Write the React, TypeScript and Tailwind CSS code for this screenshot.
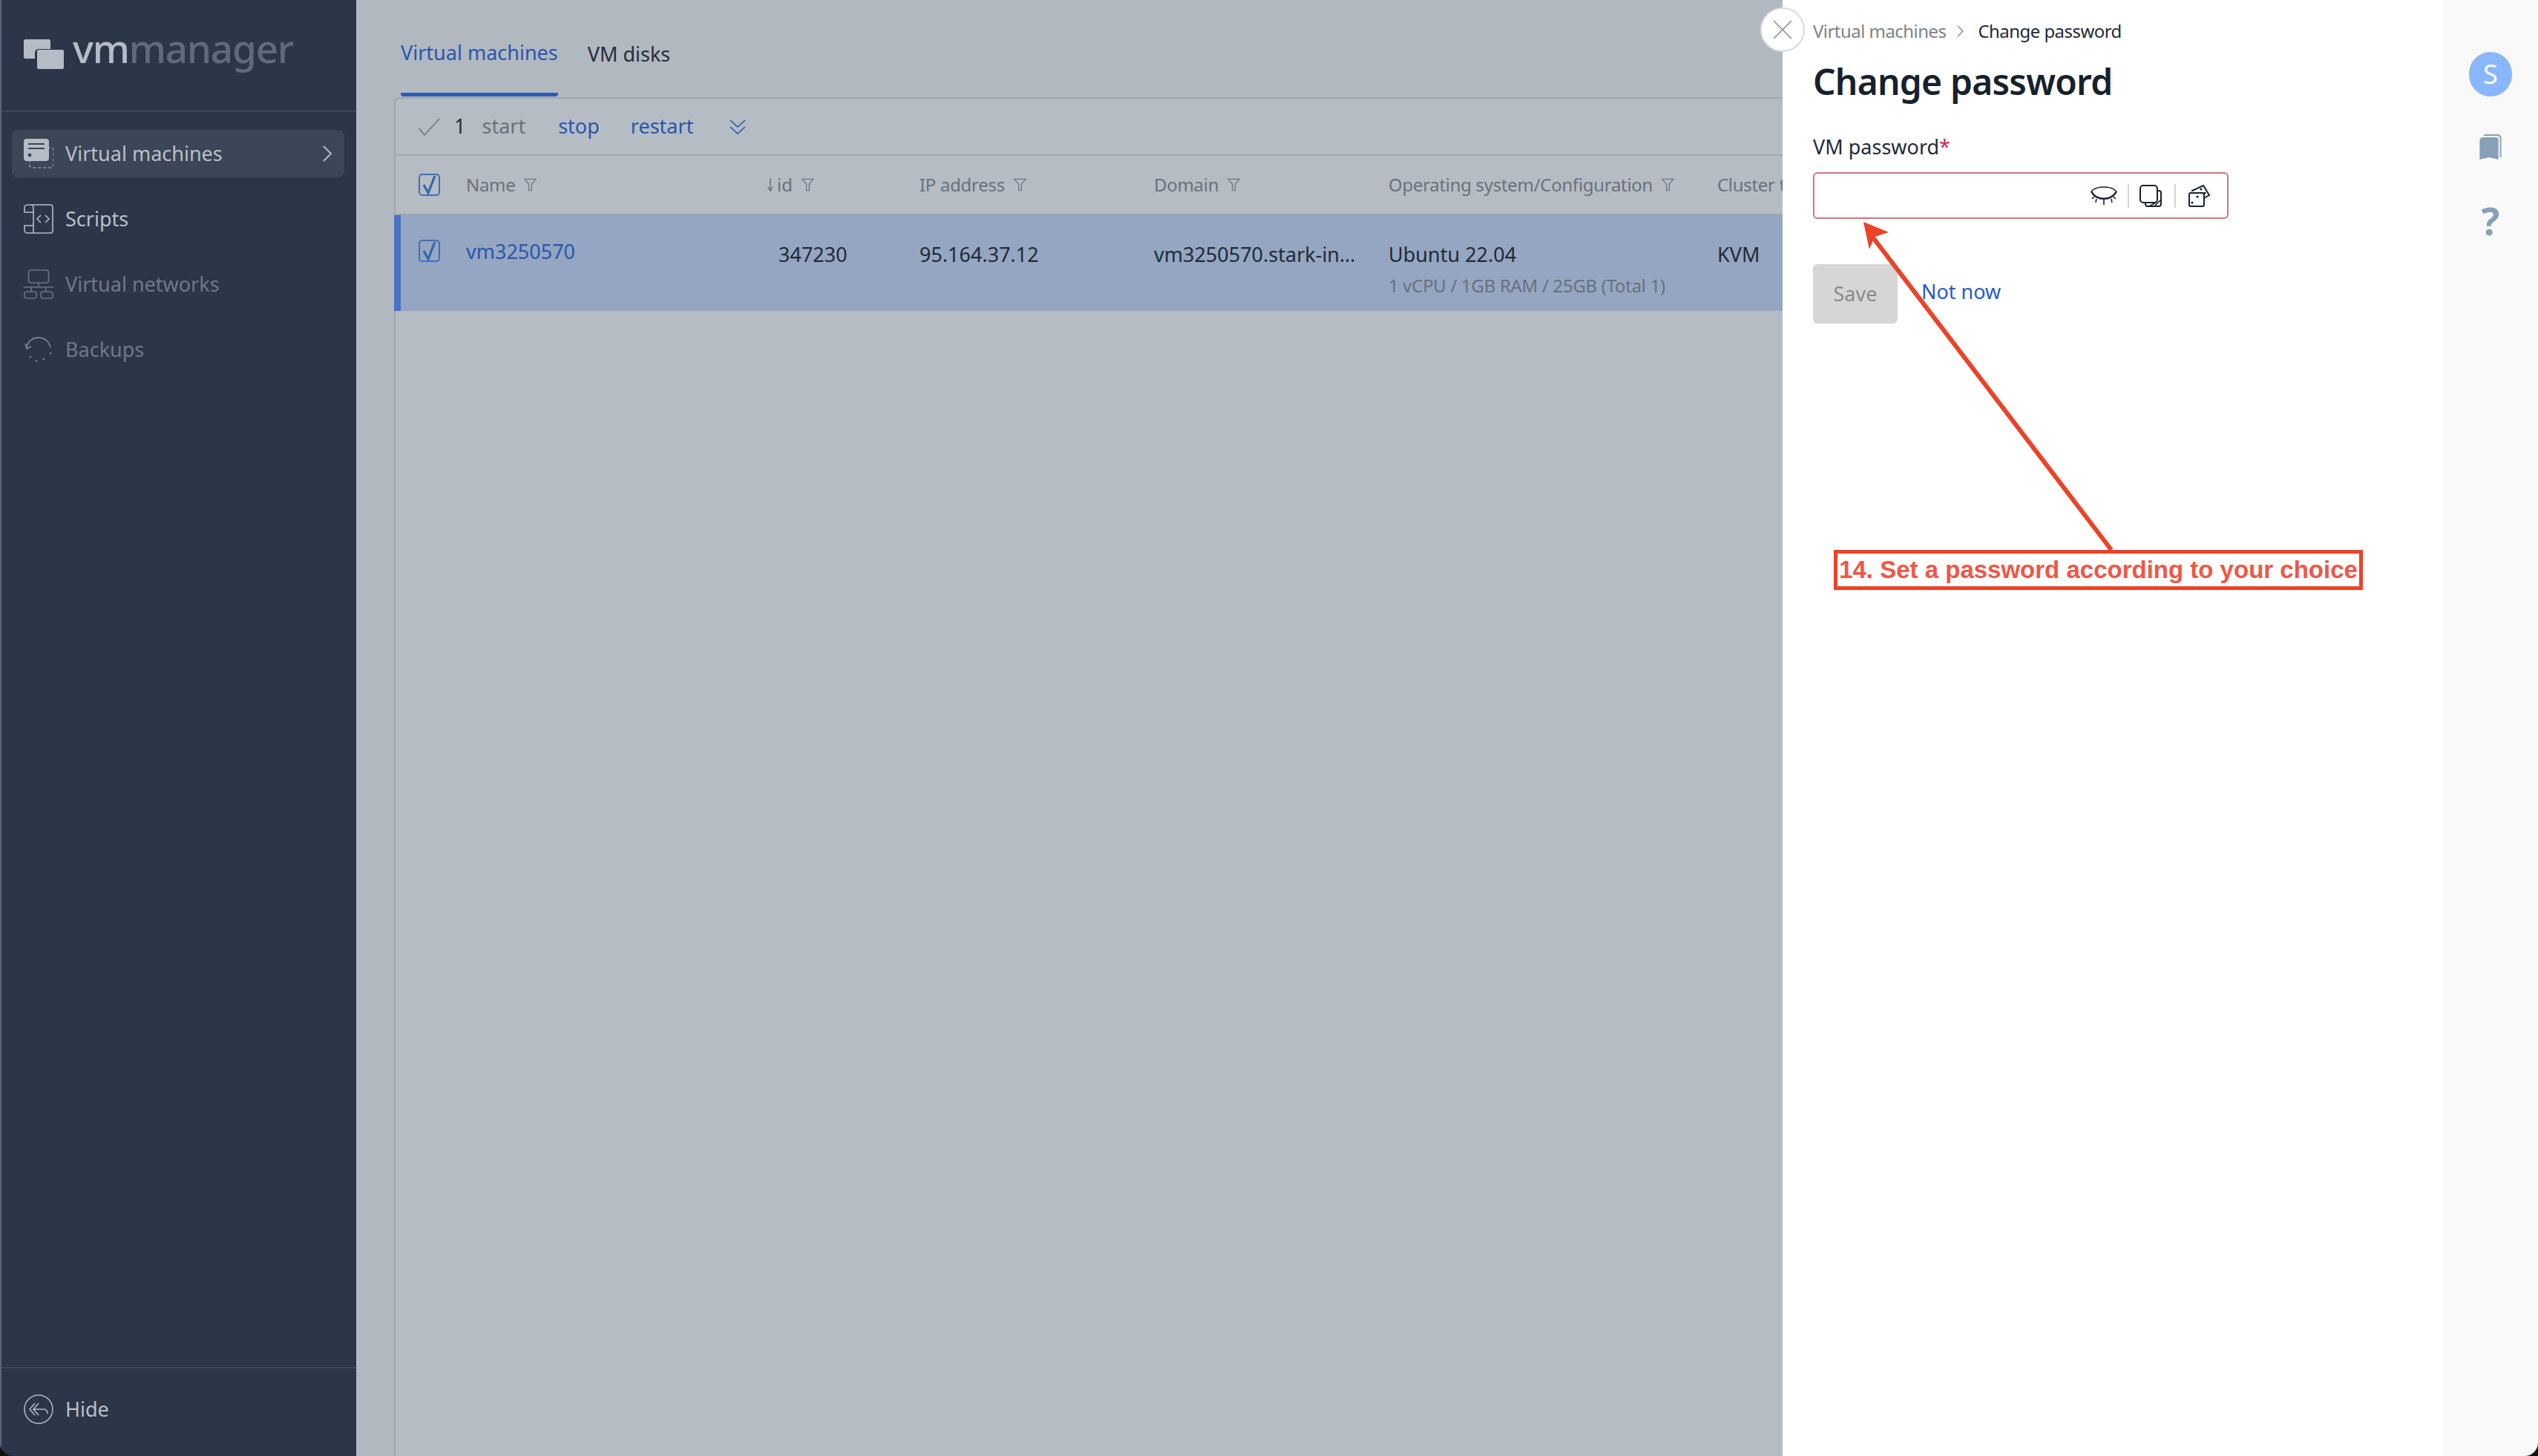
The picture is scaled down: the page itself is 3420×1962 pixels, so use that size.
import React from "react";

const Filter = ({ className = "" }: { className?: string }) => (
  <svg viewBox="0 0 18 18" className={`w-[17px] h-[18px] shrink-0 ${className}`} fill="none" stroke="#6f7883" strokeWidth="1.4">
    <path d="M1 1h16l-6 7v9H7V8z" />
  </svg>
);

const Check = () => (
  <svg viewBox="0 0 29 30" className="w-[29px] h-[30px] shrink-0" fill="none">
    <rect x="1" y="1" width="27" height="28" rx="4" stroke="#3f6ebd" strokeWidth="2" />
    <path d="M7 15l6 11L22 3" stroke="#2f66a8" strokeWidth="3" />
  </svg>
);

const VmIcon = () => (
  <svg viewBox="0 0 40 40" className="w-10 h-10 shrink-0" fill="none">
    <rect x="8" y="12" width="32" height="27" rx="3" stroke="#b4bcc6" strokeWidth="1.2" strokeDasharray="4 3" />
    <rect x="0" y="0" width="34" height="30" rx="4" fill="#b4bcc6" />
    <path d="M6 7h22M6 13h22" stroke="#3b4656" strokeWidth="2" />
    <circle cx="8" cy="22" r="2.4" fill="#3b4656" />
  </svg>
);

const ScriptIcon = () => (
  <svg viewBox="0 0 40 40" className="w-10 h-10 shrink-0" fill="none" stroke="#b4bcc6" strokeWidth="1.6">
    <path d="M5 1h31a3 3 0 0 1 3 3v32a3 3 0 0 1-3 3H5a4 4 0 0 1-4-4v-6h12M13 29v10M13 29V5a4 4 0 0 0-4-4H5a4 4 0 0 0-4 4v6h12" />
    <path d="M23 15l-5 5 5 5M29 15l5 5-5 5" strokeWidth="1.5" />
  </svg>
);

const NetIcon = () => (
  <svg viewBox="0 0 40 40" className="w-10 h-10 shrink-0" fill="none" stroke="#6a7480" strokeWidth="1.6">
    <rect x="6.5" y="1" width="27" height="17" rx="3" />
    <path d="M20 18v6M0 24h40M10 24v6M30 24v6" />
    <rect x="1" y="30" width="16" height="9" rx="3" />
    <rect x="23" y="30" width="16" height="9" rx="3" />
  </svg>
);

const BackupIcon = () => (
  <svg viewBox="0 0 40 40" className="w-10 h-10 shrink-0" fill="none" stroke="#8a929c" strokeWidth="1.4">
    <path d="M4 16C7 7 14 4 20 4c8 0 14 5 16 13" />
    <path d="M2 12l2 7 6-3" />
    <g fill="#8a929c" stroke="none">
      <circle cx="36" cy="25" r="1.2" />
      <circle cx="27" cy="33" r="1.2" />
      <circle cx="17" cy="35" r="1.2" />
      <circle cx="9" cy="30" r="1.2" />
    </g>
  </svg>
);

const HideIcon = () => (
  <svg viewBox="0 0 40 40" className="w-10 h-10 shrink-0" fill="none" stroke="#b4bcc6" strokeWidth="1.5">
    <circle cx="20" cy="20" r="19" />
    <path d="M15 12l-7 8 7 8M20 12l-7 8 7 8M14 20h13c3 0 5 2 5 6" />
  </svg>
);

const MenuItem = ({ icon, label, dim, active }: { icon: React.ReactNode; label: string; dim?: boolean; active?: boolean }) => (
  <div className={`ml-[14px] mr-4 h-16 rounded-lg flex items-center pl-4 pr-4 gap-4 ${active ? "bg-[#3b4656]" : ""}`}>
    {icon}
    <span className={`text-[27px] flex-1 ${dim ? "text-[#6f7985]" : "text-[#b8c0c9]"}`}>{label}</span>
    {active && (
      <svg viewBox="0 0 14 22" className="w-[14px] h-[22px]" fill="none" stroke="#b4bcc6" strokeWidth="2">
        <path d="M2 1l10 10L2 21" />
      </svg>
    )}
  </div>
);

const HeadCell = ({ label, className }: { label: string; className: string }) => (
  <div className={`flex items-center gap-3 shrink-0 text-[#69727d] text-[24px] tracking-[-0.3px] whitespace-nowrap ${className}`}>
    <span>{label}</span>
    <Filter />
  </div>
);

export default function App() {
  return (
    <div className="relative w-[3420px] h-[1962px] bg-[#0f1411] overflow-hidden font-['Noto_Sans',sans-serif]">
      <div className="flex w-full h-full rounded-b-[18px] overflow-hidden">
        {/* Sidebar */}
        <aside className="w-[480px] shrink-0 bg-[#2b3648] border-l-2 border-[#5d6573] flex flex-col">
          <div className="h-[151px] shrink-0 border-b-2 border-[#3c4858] flex items-center pl-[30px] gap-3 pb-1">
            <svg viewBox="0 0 54 40" className="w-[54px] h-10 shrink-0">
              <path d="M2 0h32a2 2 0 0 1 2 2v11H20a5 5 0 0 0-5 5v8H2a2 2 0 0 1-2-2V2a2 2 0 0 1 2-2z" fill="#b4bcc6" />
              <rect x="18" y="14" width="36" height="26" rx="2" fill="#b4bcc6" />
            </svg>
            <div className="text-[53px] leading-none tracking-[-1.2px] font-medium -mt-4">
              <span className="text-[#b4bcc6]">vm</span>
              <span className="text-[#5f6b79]">manager</span>
            </div>
          </div>
          <nav className="pt-6 flex flex-col gap-6 flex-1">
            <MenuItem icon={<VmIcon />} label="Virtual machines" active />
            <MenuItem icon={<ScriptIcon />} label="Scripts" />
            <MenuItem icon={<NetIcon />} label="Virtual networks" dim />
            <MenuItem icon={<BackupIcon />} label="Backups" dim />
          </nav>
          <div className="h-[120px] shrink-0 border-t-2 border-[#3c4858] flex items-center pl-[30px] gap-4 pb-2">
            <HideIcon />
            <span className="text-[27px] text-[#b8c0c9]">Hide</span>
          </div>
        </aside>

        {/* Main */}
        <main className="flex-1 min-w-0 bg-[#b1b8c0] pl-[51px] overflow-hidden flex flex-col">
          <div className="h-[131px] shrink-0 flex pl-[9px] gap-10">
            <div className="h-[130px] border-b-[5px] border-[#2e5bb0] rounded-b-sm flex items-center pt-[18px] text-[27px] text-[#2a56ad]">Virtual machines</div>
            <div className="h-[130px] flex items-center pt-4 text-[27px] text-[#252e39]">VM disks</div>
          </div>
          <section className="flex-1 w-[2000px] bg-[#b5bcc4] border-t-2 border-l-2 border-[#9fa6af] rounded-tl-lg">
            <div className="h-[77px] border-b-2 border-[#9fa6af] flex items-center pl-[31px] text-[27px]">
              <svg viewBox="0 0 29 24" className="w-[29px] h-6 shrink-0" fill="none" stroke="#6f7883" strokeWidth="1.5">
                <path d="M1 14l7 9L28 1" />
              </svg>
              <span className="ml-[19px] text-[#252e39]">1</span>
              <span className="ml-[22px] text-[#69727d]">start</span>
              <span className="ml-[44px] text-[#2a56ad]">stop</span>
              <span className="ml-[42px] text-[#2a56ad]">restart</span>
              <svg viewBox="0 0 22 20" className="ml-[49px] w-[22px] h-5 shrink-0" fill="none" stroke="#2a56ad" strokeWidth="1.6">
                <path d="M1 1l10 9 10-9M1 10l10 9 10-9" />
              </svg>
            </div>
            <div className="h-[80px] border-b-2 border-[#9fa6af] flex items-center pl-[31px]">
              <Check />
              <HeadCell label="Name" className="ml-[35px] w-[405px]" />
              <div className="w-[206px] shrink-0 flex items-center gap-3 text-[#69727d] text-[24px]">
                <span className="flex items-center gap-1">
                  <svg viewBox="0 0 10 24" className="w-[10px] h-[18px]" fill="none" stroke="#69727d" strokeWidth="2">
                    <path d="M5 0v22M1 16l4 7 4-7" />
                  </svg>
                  id
                </span>
                <Filter />
              </div>
              <HeadCell label="IP address" className="w-[316px]" />
              <HeadCell label="Domain" className="w-[316px]" />
              <HeadCell label="Operating system/Configuration" className="w-[443px]" />
              <HeadCell label="Cluster type" className="w-[200px]" />
            </div>
            <div className="h-[129px] bg-[#94a6c1] border-l-[9px] border-[#4872c4] -ml-[2px] flex items-start pl-[24px] text-[27px] text-[#1f2a38] whitespace-nowrap">
              <div className="pt-[33px] shrink-0"><Check /></div>
              <div className="ml-[35px] w-[421px] shrink-0 pt-[29px] leading-10 text-[#2a56ad]">vm3250570</div>
              <div className="w-[190px] shrink-0 pt-[33px] leading-10">347230</div>
              <div className="w-[316px] shrink-0 pt-[33px] leading-10">95.164.37.12</div>
              <div className="w-[316px] shrink-0 pt-[33px] leading-10">vm3250570.stark-in…</div>
              <div className="w-[443px] shrink-0 pt-[33px]">
                <div className="leading-10">Ubuntu 22.04</div>
                <div className="mt-[6px] leading-8 text-[24px] tracking-[-0.3px] text-[#667180]">1 vCPU / 1GB RAM / 25GB (Total 1)</div>
              </div>
              <div className="pt-[33px] leading-10">KVM</div>
            </div>
          </section>
        </main>

        {/* Drawer */}
        <div className="relative w-[890px] shrink-0 bg-white pl-[41px] pt-[24px]">
          <div className="absolute -left-[30px] top-[10px] w-[60px] h-[60px] rounded-full bg-white border-2 border-[#d9dbde] flex items-center justify-center">
            <svg viewBox="0 0 26 26" className="w-[26px] h-[26px]" fill="none" stroke="#8a8f95" strokeWidth="1.6">
              <path d="M1 1l24 24M25 1L1 25" />
            </svg>
          </div>
          <div className="flex items-center h-9 text-[24px] tracking-[-0.55px]">
            <span className="text-[#7c838b]">Virtual machines</span>
            <svg viewBox="0 0 10 18" className="ml-[15px] mr-[19px] w-[9px] h-4" fill="none" stroke="#7c838b" strokeWidth="1.5">
              <path d="M1 1l8 8-8 8" />
            </svg>
            <span className="text-[#1f2a38]">Change password</span>
          </div>
          <h1 className="mt-[20px] text-[48px] leading-[60px] font-semibold tracking-[-0.8px] text-[#17212b]">Change password</h1>
          <div className="mt-[38px] h-10 flex items-center text-[27px] text-[#1f2a38]">
            VM password<span className="text-[#d3234f]">*</span>
          </div>
          <div className="mt-[14px] w-[560px] h-[63px] rounded-md border-2 border-[#d5727c] flex items-center justify-end pr-[22px]">
            <svg viewBox="0 0 36 26" className="w-9 h-[26px]" fill="none" stroke="#17212b" strokeWidth="1.3">
              <path d="M1 7C8-1 28-1 35 7" />
              <path d="M1 7c7 13 27 13 34 0" strokeWidth="2.4" />
              <path d="M5 14l-3 3M8 17l-1 5M18 18v7M28 17l1 5M31 14l3 3" strokeWidth="1.6" />
            </svg>
            <span className="mx-[14px] w-[2px] h-8 bg-[#d3d5d8]" />
            <svg viewBox="0 0 30 30" className="w-[30px] h-[30px]" fill="none" stroke="#17212b" strokeWidth="2">
              <rect x="1" y="1" width="23" height="23" rx="4" />
              <path d="M24 8h2a3 3 0 0 1 3 3v15a3 3 0 0 1-3 3H11a3 3 0 0 1-3-3v-2" />
              <path d="M13 29l9-5M20 29l9-9" strokeWidth="1.6" />
            </svg>
            <span className="mx-[17px] w-[2px] h-8 bg-[#d3d5d8]" />
            <svg viewBox="0 0 30 30" className="w-[30px] h-[30px]" fill="none" stroke="#17212b" strokeWidth="2">
              <rect x="1" y="11" width="20" height="18" rx="2" />
              <path d="M5 9V8l15-7 8 13-7 4" />
              <g fill="#17212b" stroke="none">
                <circle cx="5" cy="24" r="1.6" />
                <circle cx="12" cy="16" r="1.6" />
                <circle cx="17" cy="6" r="1.6" />
                <circle cx="22" cy="11" r="1.6" />
              </g>
            </svg>
          </div>
          <div className="mt-[61px] flex items-start">
            <div className="w-[114px] h-20 rounded-md bg-[#d6d6d6] flex items-center justify-center text-[27px] text-[#8b8b8b]">Save</div>
            <div className="ml-[32px] mt-[17px] leading-10 text-[27px] text-[#2459d3]">Not now</div>
          </div>
        </div>

        {/* Right rail */}
        <div className="w-[128px] shrink-0 bg-[#f9f9f9] flex flex-col items-center pt-[70px]">
          <div className="w-[58px] h-[60px] rounded-full bg-[#8ab6fb] flex items-center justify-center text-[36px] text-white">S</div>
          <svg viewBox="0 0 30 36" className="mt-[51px] w-[30px] h-[35px]">
            <path d="M7 0h18a5 5 0 0 1 5 5v27h-2V6a4 4 0 0 0-4-4H5a5 5 0 0 1 2-2z" fill="#87a0b8" />
            <path d="M5 4h18a3 3 0 0 1 3 3v28l-13-3-13 3V9a5 5 0 0 1 5-5z" fill="#87a0b8" />
          </svg>
          <div className="mt-[62px] text-[52px] leading-[38px] font-bold text-[#87a0b8]">?</div>
        </div>
      </div>

      {/* Annotation */}
      <svg className="absolute left-0 top-0 pointer-events-none" width="3420" height="1962" fill="none">
        <path d="M2845 741L2520 315" stroke="#ec4326" strokeWidth="6" />
        <path d="M2511 299l34 14-19 6-7 17z" fill="#ec4326" />
      </svg>
      <div className="absolute left-[2471px] top-[741px] w-[713px] h-[54px] border-[5px] border-[#ec4326] bg-white flex items-center justify-center font-['Liberation_Sans',sans-serif] font-bold text-[33px] text-[#ef5745] whitespace-nowrap">
        14. Set a password according to your choice
      </div>
    </div>
  );
}
